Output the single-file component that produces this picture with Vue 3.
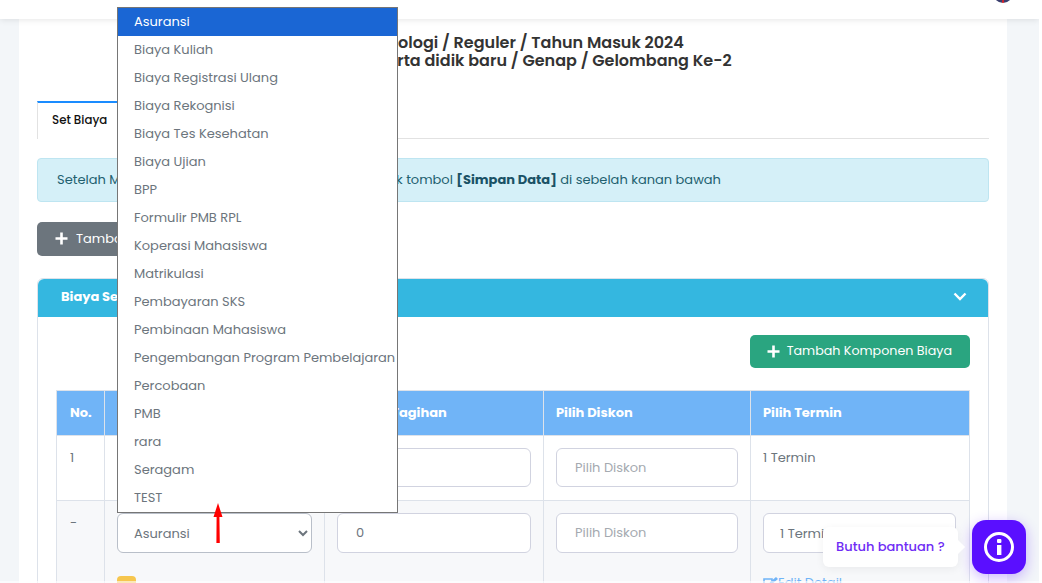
<script setup>
const options = [
  'Asuransi', 'Biaya Kuliah', 'Biaya Registrasi Ulang', 'Biaya Rekognisi', 'Biaya Tes Kesehatan',
  'Biaya Ujian', 'BPP', 'Formulir PMB RPL', 'Koperasi Mahasiswa', 'Matrikulasi', 'Pembayaran SKS',
  'Pembinaan Mahasiswa', 'Pengembangan Program Pembelajaran', 'Percobaan', 'PMB', 'rara', 'Seragam', 'TEST'
]
</script>

<template>
  <div class="page">
    <header class="topbar">
      <div class="avatar"></div>
    </header>

    <main class="card">
      <div class="heading">
        <div>Teknologi / Reguler / Tahun Masuk 2024</div>
        <div>Peserta didik baru / Genap / Gelombang Ke-2</div>
      </div>

      <div class="tabs">
        <div class="tab">Set Biaya</div>
      </div>

      <div class="alert">
        Setelah Mengisi seluruh data biaya, baru silahkan klik tombol <b>[Simpan Data]</b> di sebelah kanan bawah
      </div>

      <button class="btn btn-grey">
        <svg class="plus" width="13" height="13" viewBox="0 0 13 13"><path d="M6.5 .5v12M.5 6.5h12" stroke="#fff" stroke-width="2.6" /></svg>
        Tambah
      </button>

      <section class="panel">
        <div class="panel-head">
          <span>Biaya Semester</span>
          <svg width="14" height="9" viewBox="0 0 14 9" fill="none"><path d="M1.5 1.5 7 7l5.5-5.5" stroke="#fff" stroke-width="2.4" /></svg>
        </div>
        <div class="panel-body">
          <div class="actions">
            <button class="btn btn-green">
              <svg class="plus" width="13" height="13" viewBox="0 0 13 13"><path d="M6.5 .5v12M.5 6.5h12" stroke="#fff" stroke-width="2.6" /></svg>
              Tambah Komponen Biaya
            </button>
          </div>

          <table class="fees">
            <colgroup>
              <col class="c-no" /><col class="c-comp" /><col class="c-bill" /><col class="c-disc" /><col class="c-term" />
            </colgroup>
            <thead>
              <tr>
                <th>No.</th>
                <th>Komponen</th>
                <th>Jumlah Tagihan</th>
                <th>Pilih Diskon</th>
                <th>Pilih Termin</th>
              </tr>
            </thead>
            <tbody>
              <tr class="row-one">
                <td>1</td>
                <td></td>
                <td><input class="field" /></td>
                <td><input class="field" placeholder="Pilih Diskon" /></td>
                <td>1 Termin</td>
              </tr>
              <tr class="row-two">
                <td>-</td>
                <td>
                  <select class="field select">
                    <option>Asuransi</option>
                  </select>
                  <div class="mini-btn"></div>
                </td>
                <td><input class="field" value="0" /></td>
                <td><input class="field" placeholder="Pilih Diskon" /></td>
                <td>
                  <div class="field term">1 Termin</div>
                  <div class="edit-link">
                    <svg width="15" height="14" viewBox="0 0 15 14" fill="none"><path d="M1 3h8v10H1z" stroke="#70b4f7" stroke-width="1.6" /><path d="M6 9l1-3 6-5 2 2-6 5z" fill="#70b4f7" /></svg>
                    Edit Detail
                  </div>
                </td>
              </tr>
            </tbody>
          </table>
        </div>
      </section>
    </main>

    <!-- daftar pilihan select yang sedang terbuka -->
    <div class="dropdown">
      <div v-for="(opt, i) in options" :key="opt" class="option" :class="{ selected: i === 0 }">{{ opt }}</div>
    </div>

    <svg class="red-arrow" width="10" height="40" viewBox="0 0 10 40"><path d="M5 0 9.5 14H6.4L6.8 40H3.4L3.6 14H.5z" fill="#f00" /></svg>

    <div class="help">
      <div class="bubble">Butuh bantuan ?</div>
      <div class="help-btn">
        <svg width="32" height="32" viewBox="0 0 32 32" fill="none">
          <circle cx="16" cy="16" r="13.5" stroke="#fff" stroke-width="3" />
          <rect x="14" y="14" width="4.4" height="10" fill="#fff" />
          <rect x="14" y="8" width="4.4" height="4" rx="1" fill="#fff" />
        </svg>
      </div>
    </div>

    <div class="bottom-strip"></div>
  </div>
</template>

<style>
html, body { margin: 0; background: #fff; overflow: hidden; }
</style>

<style scoped>
.page {
  position: relative;
  width: 1039px;
  height: 583px;
  overflow: hidden;
  background: #f3f6f9;
  font-family: Poppins, Inter, "Liberation Sans", sans-serif;
  font-size: 13px;
  color: #6c757d;
}

.topbar {
  position: relative;
  z-index: 2;
  height: 19px;
  background: #fff;
  box-shadow: 0 1px 6px rgba(0, 0, 0, 0.1);
}
.avatar {
  position: absolute;
  left: 993px;
  top: -17px;
  width: 20px;
  height: 20px;
  border-radius: 50%;
  background: linear-gradient(90deg, #3b3f6e 45%, #c8242f 45% 55%, #3b3f6e 55%);
}

.card {
  width: 988px;
  height: 564px;
  margin-left: 19px;
  padding: 0 18px;
  box-sizing: border-box;
  background: #fff;
}

.heading {
  height: 82px;
  padding: 15px 0 0 322px;
  box-sizing: border-box;
  font-size: 16px;
  font-weight: 600;
  line-height: 18px;
  color: #333;
}

.tabs {
  height: 38px;
  box-sizing: border-box;
  border-bottom: 1px solid #e2e2e2;
}
.tab {
  width: 130px;
  height: 38px;
  box-sizing: border-box;
  padding: 9px 0 0 14px;
  border: 1px solid #e2e2e2;
  border-top: 2px solid #1a8cff;
  border-bottom: 0;
  background: #fff;
  font-size: 11.8px;
  font-weight: 500;
  color: #111;
}

.alert {
  height: 44px;
  margin-top: 19px;
  padding: 0 19px;
  box-sizing: border-box;
  line-height: 42px;
  border: 1px solid #bee5f1;
  border-radius: 4px;
  background: #d5f0f8;
  color: #22606f;
  white-space: nowrap;
}
.alert b { font-weight: 700; color: #1a5266; }

.btn {
  display: flex;
  align-items: center;
  gap: 8px;
  height: 34px;
  padding: 0 18px 1px;
  border: 0;
  border-radius: 5px;
  font: inherit;
  color: #fff;
}
.btn-grey {
  width: 180px;
  margin-top: 20px;
  background: #6c757d;
}
.btn-green {
  height: 33px;
  padding-left: 17px;
  gap: 7px;
  background: #2aa580;
  font-size: 12.7px;
}

.panel {
  margin-top: 22px;
  border: 1px solid #dde2ea;
  border-radius: 6px 6px 0 0;
}
.panel-head {
  height: 38px;
  padding: 0 21px 3px 23px;
  box-sizing: border-box;
  display: flex;
  align-items: center;
  justify-content: space-between;
  border-radius: 6px 6px 0 0;
  background: #34b7e0;
  color: #fff;
  font-weight: 700;
}
.panel-body { padding: 18px 18px 0; }

.actions { display: flex; justify-content: flex-end; }

.fees {
  width: 913px;
  margin-top: 22px;
  table-layout: fixed;
  border-collapse: collapse;
}
.c-no { width: 48px; }
.c-comp { width: 220px; }
.c-bill { width: 219px; }
.c-disc { width: 207px; }
.c-term { width: 219px; }

.fees th, .fees td {
  border: 1px solid #dde2ea;
  padding: 0 12px;
  text-align: left;
  vertical-align: top;
}
.fees th:first-child, .fees td:first-child { padding-left: 13px; }
.fees td:last-child { padding-right: 13px; }
.fees th {
  height: 44px;
  vertical-align: middle;
  background: #70b4f7;
  color: #fff;
  font-weight: 700;
}
.fees td { padding-top: 12px; }
.row-one { height: 65px; }
.row-two { height: 85px; }
.row-two td { background: #f7f8fa; }
.row-two .field { height: 40px; }

.field {
  display: block;
  width: 100%;
  height: 39px;
  padding: 0 18px;
  box-sizing: border-box;
  border: 1px solid #d1d3e0;
  border-radius: 6px;
  background: #fff;
  font: inherit;
  color: #6c757d;
}
.field::placeholder { color: #a5aab0; }
.select { padding-left: 12px; border-color: #b9bfc9; }
.term { padding-left: 16px; line-height: 39px; }

.mini-btn {
  width: 19px;
  height: 20px;
  margin-top: 23px;
  border-radius: 4px;
  background: #f6c64e;
}
.edit-link {
  display: flex;
  align-items: center;
  margin-top: 20px;
  color: #70b4f7;
}

.dropdown {
  position: absolute;
  left: 117px;
  top: 7px;
  z-index: 5;
  width: 281px;
  box-sizing: border-box;
  border: 1px solid #767676;
  background: #fff;
}
.option {
  height: 28px;
  line-height: 28px;
  padding-left: 16px;
  white-space: nowrap;
}
.option.selected { background: #1a66d4; color: #fff; }

.red-arrow {
  position: absolute;
  left: 213px;
  top: 503px;
  z-index: 6;
}

.help {
  position: absolute;
  left: 823px;
  top: 520px;
  z-index: 6;
  display: flex;
  align-items: center;
  gap: 14px;
}
.bubble {
  position: relative;
  width: 135px;
  box-sizing: border-box;
  margin-top: -1px;
  padding: 10px 0 10px 13px;
  border-radius: 6px;
  background: #fff;
  box-shadow: 0 2px 8px rgba(0, 0, 0, 0.06);
  color: #6f2cf5;
  font-weight: 500;
}
.bubble::after {
  content: "";
  position: absolute;
  right: -5px;
  top: 50%;
  width: 10px;
  height: 10px;
  background: #fff;
  transform: translateY(-50%) rotate(45deg);
}
.help-btn {
  display: flex;
  align-items: center;
  justify-content: center;
  width: 54px;
  height: 54px;
  border-radius: 14px;
  background: #5a0fff;
  box-shadow: 0 4px 14px rgba(90, 15, 255, 0.3);
}

.bottom-strip {
  position: absolute;
  left: 0;
  right: 0;
  bottom: 0;
  z-index: 3;
  height: 2px;
  background: rgba(255, 255, 255, 0.6);
}
</style>
